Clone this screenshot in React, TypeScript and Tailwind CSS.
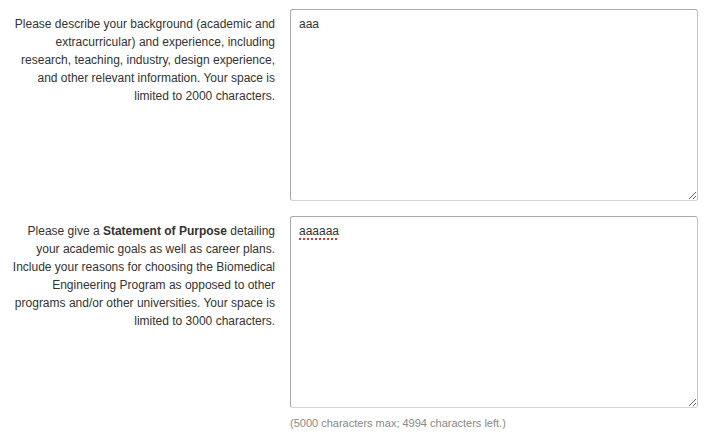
export default function App() {
  return (
    <div className="w-[714px] bg-white pt-[9px] font-['Liberation_Sans',Arial,sans-serif] text-[12px] leading-[18px] text-[#333]">
      <div className="flex">
        <label className="w-[290px] shrink-0 pt-[6px] pr-[15px] pl-[10px] text-right">
          Please describe your background (academic and
          <br />
          extracurricular) and experience, including
          <br />
          research, teaching, industry, design experience,
          <br />
          and other relevant information. Your space is
          <br />
          limited to 2000 characters.
        </label>
        <div className="flex-1 pr-[16px]">
          <textarea
            defaultValue="aaa"
            className="block h-[192px] w-full resize-y rounded-[3px] border border-[#a9a9a9] border-b-[#d4d4d4] border-r-[#c6c6c6] px-[8px] py-[5px] text-[12px] leading-[18px] text-[#333] outline-none"
          />
        </div>
      </div>
      <div className="mt-[15px] flex">
        <label className="w-[290px] shrink-0 pt-[6px] pr-[15px] pl-[10px] text-right">
          Please give a <b>Statement of Purpose</b> detailing
          <br />
          your academic goals as well as career plans.
          <br />
          Include your reasons for choosing the Biomedical
          <br />
          Engineering Program as opposed to other
          <br />
          programs and/or other universities. Your space is
          <br />
          limited to 3000 characters.
        </label>
        <div className="flex-1 pr-[16px]">
          <div className="h-[192px] w-full resize-y overflow-auto rounded-[3px] border border-[#a9a9a9] border-b-[#d4d4d4] border-r-[#c6c6c6] px-[8px] py-[5px]">
            <span className="underline decoration-[#e0342c] decoration-dotted decoration-2 underline-offset-[3px]">aaaaaa</span>
          </div>
          <p className="mt-[8px] text-[11px] leading-[14px] text-[#888]">
            (5000 characters max; 4994 characters left.)
          </p>
        </div>
      </div>
    </div>
  )
}
